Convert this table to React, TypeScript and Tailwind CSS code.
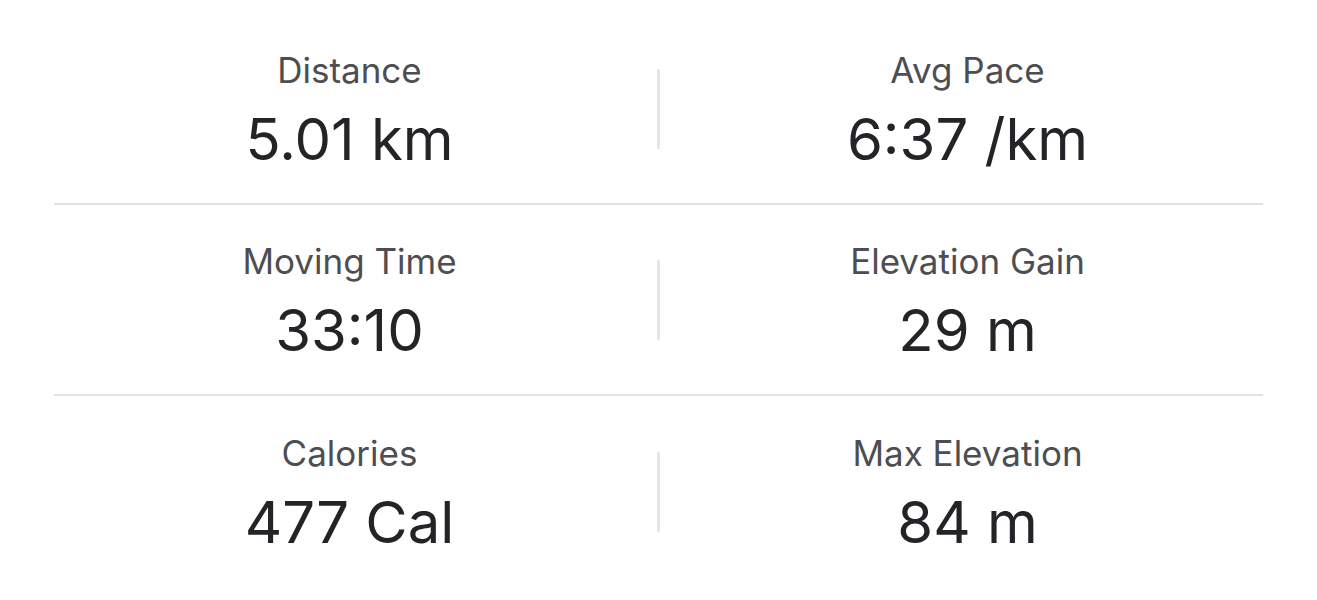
const rows = [
  [
    { label: "Distance", value: "5.01 km" },
    { label: "Avg Pace", value: "6:37 /km" },
  ],
  [
    { label: "Moving Time", value: "33:10" },
    { label: "Elevation Gain", value: "29 m" },
  ],
  [
    { label: "Calories", value: "477 Cal" },
    { label: "Max Elevation", value: "84 m" },
  ],
];

function Stat({ label, value }: { label: string; value: string }) {
  return (
    <div className="flex flex-col items-center pt-[4px]">
      <span className="text-[35px] leading-[44px] text-[#4d4d52]">{label}</span>
      <span className="mt-[12px] text-[58px] leading-[70px] text-[#242428]">{value}</span>
    </div>
  );
}

export default function App() {
  return (
    <div
      className="min-h-[600px] w-full bg-white pt-[14px]"
      style={{ fontFamily: "Inter, 'Noto Sans', sans-serif" }}
    >
      <div className="mx-[54px]">
        {rows.map((row, i) => (
          <div
            key={i}
            className={`grid h-[191px] grid-cols-[1fr_auto_1fr] items-center ${
              i < rows.length - 1 ? "border-b-2 border-[#e2e2e4]" : ""
            }`}
          >
            <Stat {...row[0]} />
            <div className="mx-[12px] h-[80px] w-[3px] bg-[#e6e6e8]" />
            <Stat {...row[1]} />
          </div>
        ))}
      </div>
    </div>
  );
}
